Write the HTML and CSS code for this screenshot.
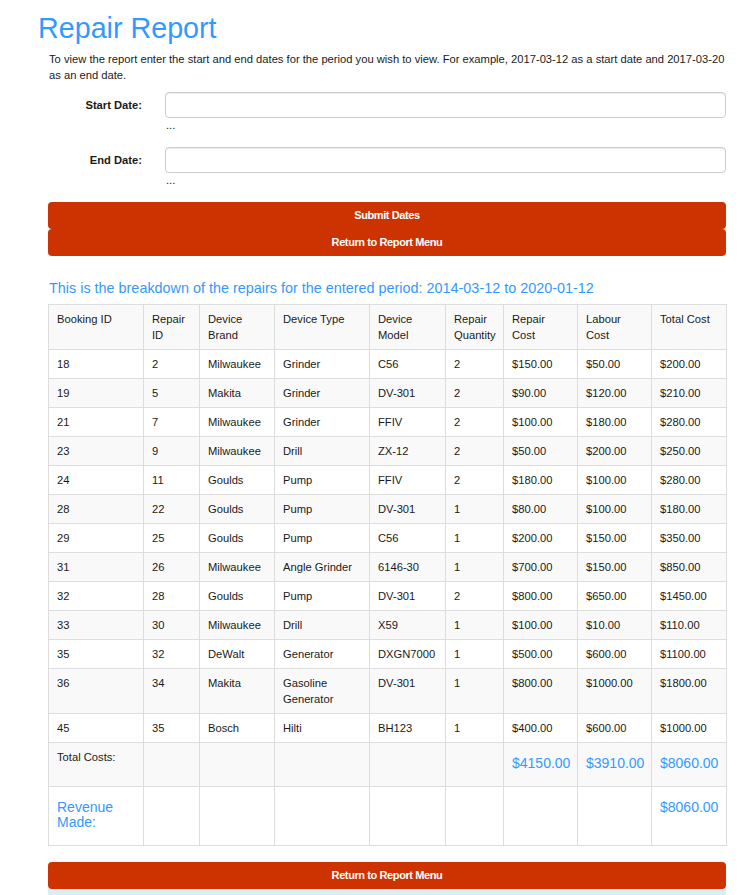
FILE: index.html
```html
<!DOCTYPE html>
<html lang="en">
<head>
<meta charset="utf-8">
<title>Repair Report</title>
<link rel="stylesheet" href="styles.css">
</head>
<body>
<div class="page">
  <h1 class="title">Repair Report</h1>
  <p class="intro">To view the report enter the start and end dates for the period you wish to view. For example, 2017-03-12 as a start date and 2017-03-20 as an end date.</p>

  <form class="date-form">
    <div class="form-group">
      <label class="control-label" for="start">Start Date:</label>
      <input class="form-control" id="start" type="text">
      <span class="help">...</span>
    </div>
    <div class="form-group">
      <label class="control-label" for="end">End Date:</label>
      <input class="form-control" id="end" type="text">
      <span class="help">...</span>
    </div>
    <div class="btn-stack">
      <button type="button" class="btn">Submit Dates</button>
      <button type="button" class="btn">Return to Report Menu</button>
    </div>
  </form>

  <h4 class="breakdown">This is the breakdown of the repairs for the entered period: 2014-03-12 to 2020-01-12</h4>

  <table class="report">
    <colgroup>
      <col class="c1"><col class="c2"><col class="c3"><col class="c4"><col class="c5"><col class="c6"><col class="c7"><col class="c8"><col class="c9">
    </colgroup>
    <tbody>
      <tr><td>Booking ID</td><td>Repair ID</td><td>Device Brand</td><td>Device Type</td><td>Device Model</td><td>Repair Quantity</td><td>Repair Cost</td><td>Labour Cost</td><td>Total Cost</td></tr>
      <tr><td>18</td><td>2</td><td>Milwaukee</td><td>Grinder</td><td>C56</td><td>2</td><td>$150.00</td><td>$50.00</td><td>$200.00</td></tr>
      <tr><td>19</td><td>5</td><td>Makita</td><td>Grinder</td><td>DV-301</td><td>2</td><td>$90.00</td><td>$120.00</td><td>$210.00</td></tr>
      <tr><td>21</td><td>7</td><td>Milwaukee</td><td>Grinder</td><td>FFIV</td><td>2</td><td>$100.00</td><td>$180.00</td><td>$280.00</td></tr>
      <tr><td>23</td><td>9</td><td>Milwaukee</td><td>Drill</td><td>ZX-12</td><td>2</td><td>$50.00</td><td>$200.00</td><td>$250.00</td></tr>
      <tr><td>24</td><td>11</td><td>Goulds</td><td>Pump</td><td>FFIV</td><td>2</td><td>$180.00</td><td>$100.00</td><td>$280.00</td></tr>
      <tr><td>28</td><td>22</td><td>Goulds</td><td>Pump</td><td>DV-301</td><td>1</td><td>$80.00</td><td>$100.00</td><td>$180.00</td></tr>
      <tr><td>29</td><td>25</td><td>Goulds</td><td>Pump</td><td>C56</td><td>1</td><td>$200.00</td><td>$150.00</td><td>$350.00</td></tr>
      <tr><td>31</td><td>26</td><td>Milwaukee</td><td>Angle Grinder</td><td>6146-30</td><td>1</td><td>$700.00</td><td>$150.00</td><td>$850.00</td></tr>
      <tr><td>32</td><td>28</td><td>Goulds</td><td>Pump</td><td>DV-301</td><td>2</td><td>$800.00</td><td>$650.00</td><td>$1450.00</td></tr>
      <tr><td>33</td><td>30</td><td>Milwaukee</td><td>Drill</td><td>X59</td><td>1</td><td>$100.00</td><td>$10.00</td><td>$110.00</td></tr>
      <tr><td>35</td><td>32</td><td>DeWalt</td><td>Generator</td><td>DXGN7000</td><td>1</td><td>$500.00</td><td>$600.00</td><td>$1100.00</td></tr>
      <tr><td>36</td><td>34</td><td>Makita</td><td>Gasoline Generator</td><td>DV-301</td><td>1</td><td>$800.00</td><td>$1000.00</td><td>$1800.00</td></tr>
      <tr><td>45</td><td>35</td><td>Bosch</td><td>Hilti</td><td>BH123</td><td>1</td><td>$400.00</td><td>$600.00</td><td>$1000.00</td></tr>
      <tr><td>Total Costs:</td><td></td><td></td><td></td><td></td><td></td><td><h4 class="sum">$4150.00</h4></td><td><h4 class="sum">$3910.00</h4></td><td><h4 class="sum">$8060.00</h4></td></tr>
      <tr><td><h4 class="sum">Revenue Made:</h4></td><td></td><td></td><td></td><td></td><td></td><td></td><td></td><td><h4 class="sum">$8060.00</h4></td></tr>
    </tbody>
  </table>

  <button type="button" class="btn btn-bottom">Return to Report Menu</button>
  <div class="alert-info"></div>
</div>
</body>
</html>
```

FILE: styles.css
```css
html, body {
  margin: 0;
  padding: 0;
  background: #ffffff;
}

body {
  font-family: "Liberation Sans", Arial, sans-serif;
  font-size: 11.2px;
  color: #1a1a1a;
}

.page {
  width: 678px;
  padding: 0 30px 0 48px;
}

.title {
  margin: 12px 0 0 -10px;
  font-size: 28.7px;
  line-height: 32px;
  font-weight: normal;
  color: #3399ff;
}

.intro {
  margin: 7px 0 0 1px;
  line-height: 16px;
}

.date-form {
  margin-top: 9px;
}

.form-group {
  display: grid;
  grid-template-columns: 94px 1fr;
  column-gap: 23px;
  margin-bottom: 15px;
}

.control-label {
  grid-column: 1;
  grid-row: 1;
  align-self: center;
  text-align: right;
  font-weight: bold;
  color: #1a1a1a;
}

.form-control {
  grid-column: 2;
  grid-row: 1;
  height: 26px;
  box-sizing: border-box;
  margin: 0;
  border: 1px solid #cccccc;
  border-radius: 4px;
  box-shadow: inset 0 1px 1px rgba(0, 0, 0, 0.075);
  background: #ffffff;
  font: inherit;
  padding: 3px 8px;
}

.help {
  grid-column: 2;
  grid-row: 2;
  line-height: 14px;
  padding-left: 1px;
  color: #1a1a1a;
}

.btn-stack {
  display: flex;
  flex-direction: column;
}

.btn {
  display: block;
  width: 100%;
  height: 27px;
  margin: 0;
  padding: 0 0 1px;
  border: 0;
  border-radius: 4px;
  background: #cc3300;
  color: #ffffff;
  font-family: "Liberation Sans", Arial, sans-serif;
  font-size: 11px;
  font-weight: bold;
  letter-spacing: -0.4px;
  text-align: center;
}

.breakdown {
  margin: 23px 0 7px 1px;
  font-size: 14.4px;
  line-height: 18px;
  font-weight: normal;
  color: #3399ff;
}

.report {
  width: 678px;
  table-layout: fixed;
  border-collapse: collapse;
  border: 1px solid #dddddd;
}

.c1 { width: 95px; }
.c2 { width: 56px; }
.c3 { width: 75px; }
.c4 { width: 95px; }
.c5 { width: 76px; }
.c6 { width: 58px; }
.c7 { width: 74px; }
.c8 { width: 74px; }
.c9 { width: 75px; }

.report td {
  border: 1px solid #dddddd;
  padding: 6px 8px;
  line-height: 16px;
  vertical-align: top;
  color: #1a1a1a;
}

.report tr:nth-child(odd) td {
  background: #f9f9f9;
}

.sum {
  margin: 7px 0 9px;
  font-size: 14px;
  line-height: 15px;
  font-weight: normal;
  color: #3399ff;
}

.btn-bottom {
  margin-top: 16px;
}

.alert-info {
  height: 20px;
  background: #d9edf7;
}
```
